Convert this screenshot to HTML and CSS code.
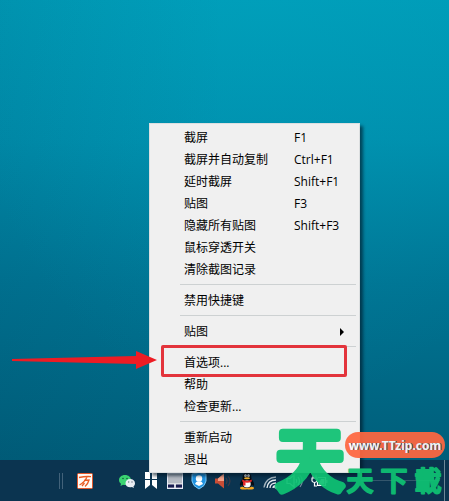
FILE: index.html
```html
<!DOCTYPE html>
<html lang="zh-CN">
<head>
<meta charset="utf-8">
<meta name="viewport" content="width=device-width, initial-scale=1">
<title>桌面</title>
<link rel="stylesheet" href="styles.css">
</head>
<body>
<main class="desktop"></main>

<footer class="taskbar">
  <span class="grip"></span>
  <button class="tray-button" aria-label="输入法"><svg width="16" height="16" viewBox="0 0 16 16"><rect x=".5" y=".5" width="15" height="15" rx="1" fill="#fffaf5" stroke="#e2582c"/><path d="M2 4.500Q8 3.200 14 3.600M10 4Q7.500 9.500 2.500 12M7 7.500L12 7Q11 11 8 13.500M7.500 10L5 13" fill="none" stroke="#e85a22" stroke-width="1.300"/></svg></button>
  <nav class="tray" aria-label="通知区域">
    <button class="tray-button" aria-label="微信"><svg width="18" height="16" viewBox="0 0 18 16"><path d="M7 2C3.500 2 1 4.200 1 7c0 1.600.8 2.900 2 3.800L2.500 13 5 11.700A8 8 0 0 0 7 12c3.500 0 6-2.200 6-5S10.500 2 7 2z" fill="#3ad271"/><circle cx="5" cy="5.500" r=".8" fill="#145b3c"/><circle cx="9" cy="5.500" r=".8" fill="#145b3c"/><path d="M12.200 6C9.500 6 7.500 7.800 7.500 10.200s2 4.100 4.700 4.100q.9 0 1.700-.3l2 1-.4-1.700C16.500 12.500 17 11.500 17 10.200 17 7.800 15 6 12.200 6z" fill="#e9edf3"/><circle cx="10.700" cy="9" r=".7" fill="#667383"/><circle cx="14" cy="9" r=".7" fill="#667383"/></svg></button>
    <button class="tray-button" aria-label="Snipaste"><svg width="14" height="18" viewBox="0 0 14 18"><path d="M1 0H6V10H1zM8 0H13V10H8z" fill="#fff"/><path d="M1 8H6V13L1 17zM8 8H13V17L8 13z" fill="#fff"/><path d="M1 7.500H13" stroke="#0b3450"/></svg></button>
    <button class="tray-button" aria-label="触摸板"><svg width="16" height="16" viewBox="0 0 16 16"><rect x=".5" y=".5" width="15" height="15" fill="#b4b9c2" stroke="#e8eaf5"/><path d="M1 11H15" stroke="#fff"/><path d="M1 13H7M9 13H15" stroke="#171b50" stroke-width="3"/><path d="M1 15.500H15M8 11V16" stroke="#eceefa"/></svg></button>
    <button class="tray-button" aria-label="安全卫士"><svg width="16" height="18" viewBox="0 0 16 18"><path d="M1 2Q5 2 8 0Q11 2 15 2V9Q14.500 14 8 17Q1.500 14 1 9z" fill="#1e91df" stroke="#78c6f4"/><circle cx="8" cy="6.500" r="3.200" fill="#fff"/><path d="M4 12Q5 9.500 6 9.500H10Q11 9.500 12 12L8 14z" fill="#fff"/></svg></button>
    <button class="tray-button" aria-label="扬声器"><svg width="18" height="16" viewBox="0 0 18 16"><path d="M1 5.500H4L10 .5V15.500L4 10.500H1z" fill="#c94d35"/><path d="M4 5.500L10 .5V8L4 8z" fill="#f2a087"/><path d="M12 5Q14 8 12 11M14 3Q18 8 14 13" fill="none" stroke="#3c3a47" stroke-width="1.200"/></svg></button>
    <button class="tray-button" aria-label="QQ"><svg width="16" height="18" viewBox="0 0 16 18"><ellipse cx="5" cy="16" rx="4" ry="1.600" fill="#f4a722"/><ellipse cx="11" cy="16" rx="4" ry="1.600" fill="#f4a722"/><path d="M3.500 7C3.500 2 5.500 0 8 0s4.500 2 4.500 7c2 2 3 5 2.500 6.500-.5.600-1.600-.4-2-1Q12 16 8 16T3 12.500c-.4.600-1.500 1.600-2 1C.5 12 1.500 9 3.500 7z" fill="#070b10"/><ellipse cx="8" cy="12" rx="3.700" ry="3.500" fill="#fff"/><ellipse cx="6.500" cy="3.600" rx="1.200" ry="1.700" fill="#fff"/><ellipse cx="9.500" cy="3.600" rx="1.200" ry="1.700" fill="#fff"/><circle cx="6.800" cy="4" r=".5"/><circle cx="9.200" cy="4" r=".5"/><ellipse cx="8" cy="6.200" rx="3" ry="1" fill="#f6b02a"/><path d="M3.200 7.500Q8 10 12.800 7.500V9.500Q8 12 3.200 9.500z" fill="#e32929"/><path d="M4 9.500L6.500 10.500V13.500H4z" fill="#e32929"/></svg></button>
    <button class="tray-button" aria-label="无线网络"><svg width="16" height="16" viewBox="0 0 16 16" fill="none" stroke="#e5ecf0" stroke-width="1.300"><path d="M1 14.500C2 8 7 4 13 4" opacity=".7"/><path d="M4 15C4.500 10 8 7 13 7"/><path d="M7 15C7 12 9.500 10 13 10"/><path d="M10 15Q10 13 13 12.500"/><circle cx="12.700" cy="14.200" r="1.200" fill="#fff" stroke="none"/></svg></button>
    <button class="tray-button" aria-label="音量"><svg width="18" height="16" viewBox="0 0 18 16" fill="none" stroke="#dce5ea" stroke-width="1.200"><path d="M1 5.500H4L8 2V14L4 10.500H1z"/><path d="M10 6Q11.500 8 10 10M12 4Q15 8 12 12"/><path d="M14 2Q18.500 8 14 14" opacity=".5"/></svg></button>
    <button class="tray-button" aria-label="电源"><svg width="18" height="16" viewBox="0 0 18 16" fill="none" stroke="#fff" stroke-width="1.200"><path d="M3 2V5M6 2V5M2 5H7V8Q6 9.500 4.500 9.500T2 8zM4.500 9V13H7"/><path d="M8 4.500H15.500V12.500H7.500V9"/><path d="M8.500 11.500L11 6H14.500V11.500z" fill="#fff" stroke="none"/><path d="M16.800 7V10"/></svg></button>
  </nav>
  <div class="clock"><span class="clock-line"></span></div>
  <button class="show-desktop" aria-label="显示桌面"></button>
</footer>

<ul class="menu" role="menu">
  <li><button class="item"><span>截屏</span><kbd>F1</kbd></button></li>
  <li><button class="item"><span>截屏并自动复制</span><kbd>Ctrl+F1</kbd></button></li>
  <li><button class="item"><span>延时截屏</span><kbd>Shift+F1</kbd></button></li>
  <li><button class="item"><span>贴图</span><kbd>F3</kbd></button></li>
  <li><button class="item"><span>隐藏所有贴图</span><kbd>Shift+F3</kbd></button></li>
  <li><button class="item"><span>鼠标穿透开关</span></button></li>
  <li><button class="item"><span>清除截图记录</span></button></li>
  <li class="separator"></li>
  <li><button class="item"><span>禁用快捷键</span></button></li>
  <li class="separator"></li>
  <li><button class="item"><span>贴图</span><svg class="submenu" width="4" height="8" viewBox="0 0 4 8"><path d="M0 0L4 4L0 8z"/></svg></button></li>
  <li class="separator"></li>
  <li class="marked"><button class="item"><span>首选项...</span></button>
    <svg class="arrow" width="146" height="20" viewBox="0 0 146 20"><path d="M1 9L125 6L125 1L146 10L125 19L125 14L1 11z" fill="#ed1c24"/></svg>
  </li>
  <li><button class="item"><span>帮助</span></button></li>
  <li><button class="item"><span>检查更新...</span></button></li>
  <li class="separator"></li>
  <li><button class="item"><span>重新启动</span></button></li>
  <li><button class="item"><span>退出</span></button></li>
</ul>

<aside class="brand">
  <svg class="brand-mark" width="76" height="80" viewBox="0 0 76 80"><text x="38" y="64" text-anchor="middle">天</text></svg>
  <div class="brand-side">
    <span class="brand-site">www.TTzip.com</span>
    <svg class="brand-name" width="100" height="36" viewBox="0 0 100 36"><text x="15" y="26" text-anchor="middle">天</text><text x="49" y="26" text-anchor="middle">下</text><text x="83" y="26" text-anchor="middle">載</text></svg>
  </div>
</aside>
</body>
</html>
```
FILE: styles.css
```css
* { box-sizing: border-box; }

body {
  margin: 0;
  min-height: 100vh;
  display: flex;
  flex-direction: column;
  position: relative;
  overflow: hidden;
  font-family: "Open Sans", "Noto Sans CJK SC", sans-serif;
  font-size: 12px;
}

button {
  border: 0;
  padding: 0;
  background: none;
  font: inherit;
  color: inherit;
}

.desktop {
  flex: 1;
  background:
    radial-gradient(ellipse 70% 90% at 60% 0%, rgba(0, 170, 195, 0.2), transparent),
    linear-gradient(to right, rgba(0, 60, 90, 0.1), transparent 50%),
    linear-gradient(#009cb8, #008fad 30%, #007493 62%, #005e7a);
}

.taskbar {
  height: 41px;
  display: flex;
  align-items: center;
  justify-content: flex-end;
  background: #0b3450;
}

.grip {
  width: 4px;
  height: 16px;
  margin-right: 10px;
  border: solid #42627a;
  border-width: 0 1px;
}

.tray { display: flex; margin-left: 18px; }

.tray-button {
  width: 24px;
  height: 40px;
  display: flex;
  align-items: center;
  justify-content: center;
}

.clock { width: 113px; padding: 0 4px 0 30px; }

.clock-line {
  display: block;
  height: 1px;
  background: #34566c;
}

.show-desktop {
  width: 5px;
  height: 41px;
  border-left: 1px solid #6c8797;
}

.menu {
  position: absolute;
  right: 89px;
  bottom: 28px;
  width: 211px;
  margin: 0;
  padding: 3px 0 1px;
  list-style: none;
  background: #f0f0f0;
  border: 1px solid #dcdfe0;
  box-shadow: 3px 3px 3px rgba(0, 20, 35, 0.6);
  color: #000;
}

.item {
  width: 100%;
  height: 22px;
  padding: 0 15px 0 34px;
  display: grid;
  grid-template-columns: 110px 1fr;
  align-items: center;
  text-align: left;
  line-height: 22px;
  white-space: nowrap;
}

.item kbd { font: inherit; }

.submenu { justify-self: end; }

.separator {
  height: 9px;
  margin: 0 3px 0 30px;
  padding-top: 3px;
}

.separator::before {
  content: "";
  display: block;
  height: 1px;
  background: #cdd1d2;
}

.marked { position: relative; }

.marked::after {
  content: "";
  position: absolute;
  inset: -7px 12px -3px 11px;
  border: 3px solid #e3343c;
  border-radius: 2px;
}

.arrow {
  position: absolute;
  right: 202px;
  top: -2px;
}

.brand {
  position: absolute;
  right: 4px;
  bottom: 0;
  display: flex;
  align-items: flex-end;
  font-family: "Noto Sans CJK TC", sans-serif;
  opacity: 0.93;
}

.brand-mark,
.brand-name {
  display: block;
  overflow: visible;
  fill: #0fc273;
  stroke: #0fc273;
  stroke-linejoin: round;
}

.brand-mark {
  margin-right: -3px;
  font-size: 68px;
  font-weight: 400;
  stroke-width: 8px;
}

.brand-name {
  font-size: 27px;
  font-weight: 500;
  stroke-width: 2px;
}

.brand-side { width: 100px; }

.brand-site {
  display: block;
  height: 26px;
  margin-bottom: 7px;
  border-radius: 13px;
  background: #ff6740;
  font-family: "Noto Sans", sans-serif;
  font-size: 12px;
  font-weight: 700;
  line-height: 27px;
  text-align: center;
  color: #fff;
  text-shadow: 1px 0 0 #3c4457;
}
```
